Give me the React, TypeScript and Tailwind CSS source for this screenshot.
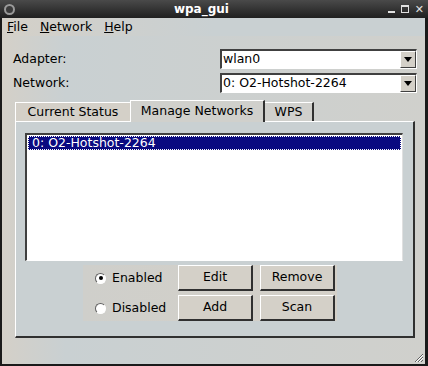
import { ReactNode } from "react";

const font = "font-['DejaVu_Sans','Liberation_Sans',sans-serif]";

const Combo = ({ value }: { value: string }) => (
  <div className="flex h-[20px] w-[197px] border-t-2 border-l-2 border-t-[#404040] border-l-[#404040] border-b border-r border-b-white border-r-white bg-white">
    <div className="flex-1 flex items-center pl-[1px] text-[12.5px] text-black leading-none">{value}</div>
    <div className="w-[16px] flex items-center justify-center bg-[#d4d0c8] border-t border-l border-white border-b border-r border-b-[#404040] border-r-[#404040]">
      <svg width="8" height="5" viewBox="0 0 8 5">
        <path d="M0 0h8L4 5z" fill="#000" />
      </svg>
    </div>
  </div>
);

const Button = ({ children }: { children: ReactNode }) => (
  <div className="w-[75px] h-[26px] flex items-center justify-center bg-[#d4d0c8] border-t border-l border-t-white border-l-white border-b-2 border-r-2 border-b-[#303030] border-r-[#303030] text-[12.5px] text-black">
    {children}
  </div>
);

const Radio = ({ checked, label }: { checked?: boolean; label: string }) => (
  <div className="flex items-center gap-[6px] w-[81px] text-[12.5px] text-black">
    <div className="w-[11px] h-[11px] rounded-full bg-white border border-t-[#606060] border-l-[#606060] border-b-white border-r-white flex items-center justify-center">
      {checked && <div className="w-[4px] h-[4px] rounded-full bg-black" />}
    </div>
    <span>{label}</span>
  </div>
);

const App = () => {
  return (
    <div className={`w-[428px] h-[366px] bg-[#1a1a1a] flex flex-col ${font}`}>
      {/* title bar */}
      <div className="h-[18px] flex items-center px-[4px] bg-gradient-to-b from-[#4a4a4a] to-[#202020]">
        <div className="w-[11px] h-[11px] rounded-full border-2 border-[#9a9a9a] bg-[#3a3a3a]" />
        <div className="flex-1 text-center text-white font-bold text-[12px] leading-none">wpa_gui</div>
        <div className="flex items-center gap-[6px] text-[#e0e0e0] text-[11px] font-bold leading-none">
          <div className="w-[7px] h-[2px] bg-[#e0e0e0] mt-[5px]" />
          <div className="w-[8px] h-[8px] border border-[#e0e0e0] border-t-2" />
          <span>✕</span>
        </div>
      </div>
      {/* body */}
      <div className="flex-1 ml-[2px] mr-[3px] mb-[2px] bg-[#c9d0d2] flex flex-col">
        <div className="h-[18px] flex items-center gap-[12px] pl-[5px] text-[12.5px] text-black bg-gradient-to-r from-[#d4d0c8] via-[#c9d0d2] to-[#c9d0d2]">
          <span><u>F</u>ile</span>
          <span><u>N</u>etwork</span>
          <span><u>H</u>elp</span>
        </div>
        <div className="flex-1 flex flex-col pl-[10px] pr-[8px] pt-[13px] bg-gradient-to-r from-[#d4d0c8] from-[0%] via-[#c9d0d2] via-[15%] to-[#d0d0cc]">
          <div className="flex items-center justify-between h-[20px] pl-[1px]">
            <span className="text-[12.5px] text-black">Adapter:</span>
            <Combo value="wlan0" />
          </div>
          <div className="flex items-center justify-between h-[20px] mt-[4px] pl-[1px]">
            <span className="text-[12.5px] text-black">Network:</span>
            <Combo value="0: O2-Hotshot-2264" />
          </div>
          {/* tabs */}
          <div className="flex items-end mt-[6px] ml-[3px] h-[22px] text-[12.5px] text-black">
            <div className="w-[115px] h-[19px] flex items-center justify-center bg-[#d4d0c8] border-t border-l border-white">Current Status</div>
            <div className="w-[135px] h-[22px] flex items-center justify-center bg-[#d0d0cc] border-t border-l border-white border-r-2 border-r-[#303030] -mb-[1px] z-10">Manage Networks</div>
            <div className="w-[49px] h-[19px] flex items-center justify-center bg-[#d0d0cc] border-t border-r-2 border-white border-r-[#303030]">WPS</div>
          </div>
          <div className="w-[400px] h-[217px] ml-[3px] border-t border-l border-white border-b-2 border-r-2 border-b-[#303030] border-r-[#303030] flex flex-col pt-[11px] pl-[9px] bg-[#c9d0d2]">
            <div className="w-[378px] h-[128px] bg-white border-t-2 border-l-2 border-t-[#404040] border-l-[#404040] border-b border-r border-b-white border-r-[#e0e0e0] p-[1px]">
              <div className="h-[14px] bg-[#0a0a80] border border-dotted border-white text-white text-[12.5px] leading-none pl-[3px] flex items-center">
                0: O2-Hotshot-2264
              </div>
            </div>
            <div className="flex flex-col gap-[4px] mt-[4px] ml-[58px] w-[254px] pl-[12px] bg-gradient-to-r from-[#cfcfcb] to-[#d4d0c8]">
              <div className="flex items-center gap-[2px]">
                <Radio checked label="Enabled" />
                <Button>Edit</Button>
                <div className="w-[3px]" />
                <Button>Remove</Button>
              </div>
              <div className="flex items-center gap-[2px]">
                <Radio label="Disabled" />
                <Button>Add</Button>
                <div className="w-[3px]" />
                <Button>Scan</Button>
              </div>
            </div>
          </div>
          <div className="flex-1 flex justify-end items-end">
            <svg width="11" height="11" viewBox="0 0 11 11" className="mb-[1px] -mr-[7px]">
              <path d="M10 2L2 10M10 5L5 10M10 8L8 10" stroke="#606060" strokeWidth="1" />
              <path d="M10 3L3 10M10 6L6 10" stroke="#ffffff" strokeWidth="1" />
            </svg>
          </div>
        </div>
      </div>
    </div>
  );
};

export default App;
